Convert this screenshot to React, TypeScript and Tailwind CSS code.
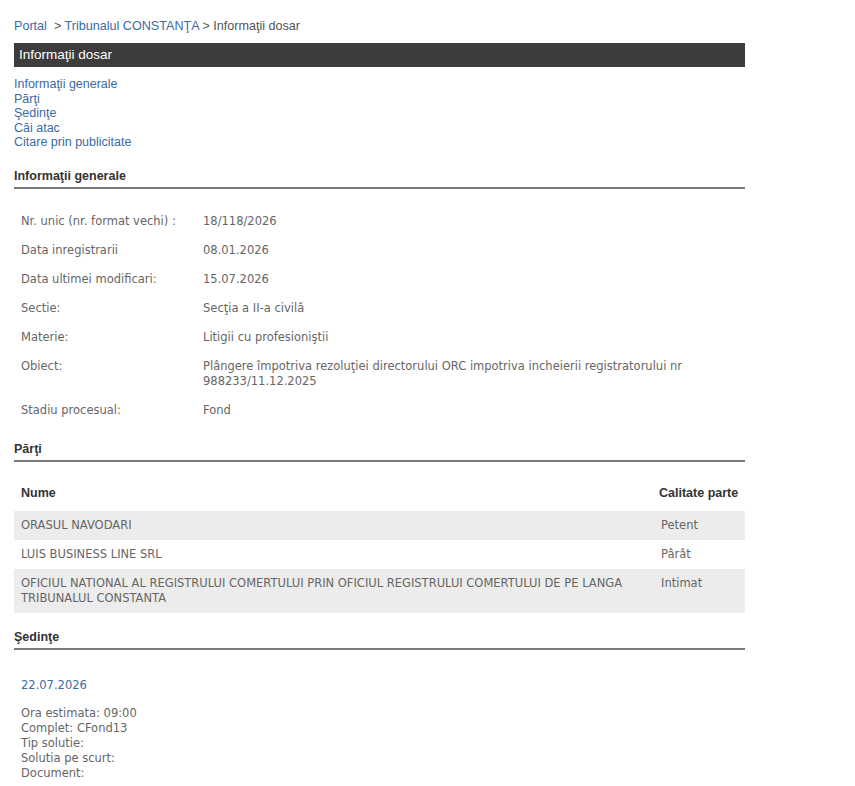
import React from "react";

const generalInfo: { label: string; value: React.ReactNode }[] = [
  { label: "Nr. unic (nr. format vechi) :", value: "18/118/2026" },
  { label: "Data inregistrarii", value: "08.01.2026" },
  { label: "Data ultimei modificari:", value: "15.07.2026" },
  { label: "Sectie:", value: "Secţia a II-a civilă" },
  { label: "Materie:", value: "Litigii cu profesioniştii" },
  {
    label: "Obiect:",
    value:
      "Plângere împotriva rezoluţiei directorului ORC impotriva incheierii registratorului nr 988233/11.12.2025",
  },
  { label: "Stadiu procesual:", value: "Fond" },
];

const parties = [
  { name: "ORASUL NAVODARI", role: "Petent" },
  { name: "LUIS BUSINESS LINE SRL", role: "Pârât" },
  {
    name: "OFICIUL NATIONAL AL REGISTRULUI COMERTULUI PRIN OFICIUL REGISTRULUI COMERTULUI DE PE LANGA TRIBUNALUL CONSTANTA",
    role: "Intimat",
  },
];

const navLinks = ["Informaţii generale", "Părţi", "Şedinţe", "Căi atac", "Citare prin publicitate"];

const SectionHeading = ({ title }: { title: string }) => (
  <div className="border-b-2 border-[#7a7a7a] pb-[3px] text-[12.5px] leading-[15px] font-bold text-[#333]">
    {title}
  </div>
);

export default function App() {
  return (
    <div className="min-h-[786px] bg-white pl-[14px] pt-[19px] font-['Liberation_Sans',Arial,sans-serif]">
      <div className="w-[731px]">
        {/* Breadcrumb */}
        <div className="text-[12.6px] leading-[14px] text-[#555]">
          <span className="text-[#3d6aa2]">Portal</span>
          <span>&nbsp; &gt; </span>
          <span className="text-[#3d6aa2]">Tribunalul CONSTANŢA</span>
          <span> &gt; Informaţii dosar</span>
        </div>

        <div className="mt-[10px] flex h-[24px] items-center bg-[#3c3c3c] px-[5px] text-[13.5px] text-white">
          Informaţii dosar
        </div>

        <div className="mt-[10px] flex flex-col text-[12.5px] leading-[14.5px] text-[#3d6aa2]">
          {navLinks.map((l) => (
            <span key={l}>{l}</span>
          ))}
        </div>

        {/* General info */}
        <div className="mt-[19px]">
          <SectionHeading title="Informaţii generale" />
        </div>
        <table className="mt-[18px] w-full border-collapse font-['DejaVu_Sans',Verdana,sans-serif] text-[11.5px] leading-[15px] text-[#666]">
          <tbody>
            {generalInfo.map((r) => (
              <tr key={r.label}>
                <td className="w-[189px] px-[7px] py-[7px] align-top">{r.label}</td>
                <td className="py-[7px] pr-[60px] align-top">{r.value}</td>
              </tr>
            ))}
          </tbody>
        </table>

        {/* Parties */}
        <div className="mt-[17px]">
          <SectionHeading title="Părţi" />
        </div>
        <table className="mt-[17px] w-full border-collapse text-[11.5px] leading-[15px]">
          <thead>
            <tr className="h-[32px] text-[12.5px] font-bold text-[#333]">
              <th className="px-[7px] pb-[2px] text-left align-middle">Nume</th>
              <th className="w-[91px] px-[5px] pb-[2px] text-left align-middle">Calitate parte</th>
            </tr>
          </thead>
          <tbody className="font-['DejaVu_Sans',Verdana,sans-serif] text-[#666]">
            {parties.map((p, i) => (
              <tr key={p.name} className={i % 2 === 0 ? "bg-[#ececec]" : "bg-white"}>
                <td className="px-[7px] py-[7px] align-top">{p.name}</td>
                <td className="px-[7px] py-[7px] align-top">{p.role}</td>
              </tr>
            ))}
          </tbody>
        </table>

        {/* Hearings */}
        <div className="mt-[17px]">
          <SectionHeading title="Şedinţe" />
        </div>
        <div className="px-[7px] pt-[28px] font-['DejaVu_Sans',Verdana,sans-serif] text-[11.5px] leading-[15px] text-[#666]">
          <div className="text-[#3d6aa2]">22.07.2026</div>
          <div className="mt-[13px]">
            <div>Ora estimata: 09:00</div>
            <div>Complet: CFond13</div>
            <div>Tip solutie:</div>
            <div>Solutia pe scurt:</div>
            <div>Document:</div>
          </div>
        </div>
      </div>
    </div>
  );
}
